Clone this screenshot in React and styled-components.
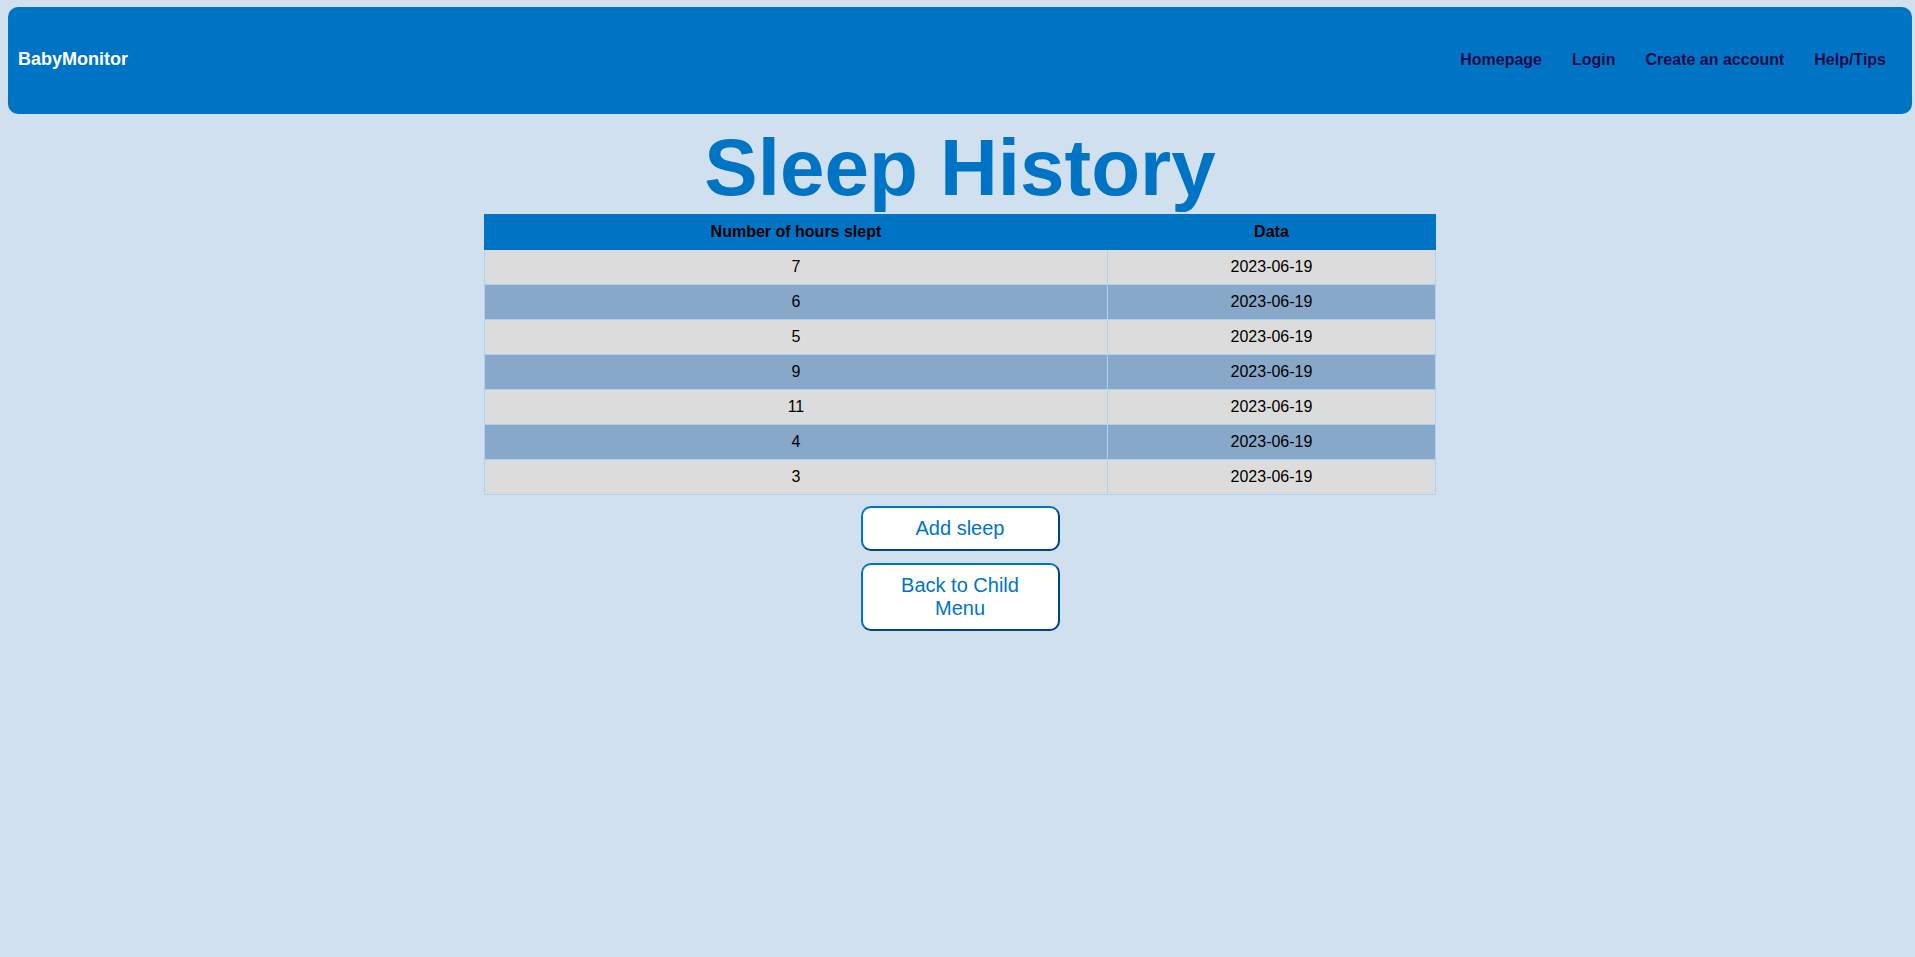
import React from "react";
import styled, { createGlobalStyle } from "styled-components";

const GlobalStyle = createGlobalStyle`
  html, body {
    background: #d0e0ef;
    overflow-x: hidden;
  }
  body {
    margin: 7px 0 0 8px;
    font-family: "Liberation Sans", Arial, sans-serif;
  }
`;

const sleeps = [
  { hours: 7, date: "2023-06-19" },
  { hours: 6, date: "2023-06-19" },
  { hours: 5, date: "2023-06-19" },
  { hours: 9, date: "2023-06-19" },
  { hours: 11, date: "2023-06-19" },
  { hours: 4, date: "2023-06-19" },
  { hours: 3, date: "2023-06-19" },
];

export default function App() {
  return (
    <>
      <GlobalStyle />
      <Page>
        <NavBar>
          <Brand>BabyMonitor</Brand>
          <NavLinks>
            <NavLink href="#">Homepage</NavLink>
            <NavLink href="#">Login</NavLink>
            <NavLink href="#">Create an account</NavLink>
            <NavLink href="#">Help/Tips</NavLink>
          </NavLinks>
        </NavBar>
        <Title>Sleep History</Title>
        <SleepTable>
          <thead>
            <tr>
              <Th>Number of hours slept</Th>
              <Th>Data</Th>
            </tr>
          </thead>
          <tbody>
            {sleeps.map((s, i) => (
              <Row key={i} $dark={i % 2 === 1}>
                <Td>{s.hours}</Td>
                <Td>{s.date}</Td>
              </Row>
            ))}
          </tbody>
        </SleepTable>
        <Actions>
          <ActionButton>Add sleep</ActionButton>
          <ActionButton>Back to Child Menu</ActionButton>
        </Actions>
      </Page>
    </>
  );
}

const Page = styled.div`
  width: 1904px;
`;

const NavBar = styled.nav`
  display: flex;
  align-items: center;
  justify-content: space-between;
  height: 107px;
  padding: 0 11px 2px 10px;
  box-sizing: border-box;
  background: #0074c4;
  border-radius: 10px;
`;

const Brand = styled.span`
  color: #ffffff;
  font-size: 18px;
  font-weight: bold;
`;

const NavLinks = styled.ul`
  display: flex;
  align-items: center;
  list-style: none;
  margin: 0;
  padding: 0;
`;

const NavLink = styled.a`
  padding: 0 15px;
  color: #1e0b4b;
  font-size: 16px;
  font-weight: bold;
  text-decoration: none;
`;

const Title = styled.h1`
  margin: 8px 0 0;
  text-align: center;
  color: #0074c4;
  font-size: 80px;
  font-weight: bold;
  line-height: 92px;
`;

const SleepTable = styled.table`
  width: 50%;
  margin: 0 auto;
  border-collapse: collapse;
  border: 1px solid #a8d4f7;
  font-size: 16px;
`;

const Th = styled.th`
  background: #0074c4;
  color: #000000;
  font-weight: bold;
  padding: 8px;
  border: 1px solid #0074c4;
`;

const Row = styled.tr`
  background: ${(p) => (p.$dark ? "#87a8c9" : "#dcdcdc")};
`;

const Td = styled.td`
  padding: 8px;
  text-align: center;
  color: #000000;
  border: 1px solid #a8d4f7;
`;

const Actions = styled.div`
  display: flex;
  flex-direction: column;
  align-items: center;
  gap: 12px;
  margin-top: 11px;
`;

const ActionButton = styled.button`
  width: 199px;
  padding: 9px 20px;
  background: #ffffff;
  color: #0074c4;
  font-family: "Liberation Sans", Arial, sans-serif;
  font-size: 20px;
  line-height: 23px;
  border: 2px solid;
  border-color: #0074c4 #00457a #00457a #0074c4;
  border-radius: 10px;
  cursor: pointer;
`;
